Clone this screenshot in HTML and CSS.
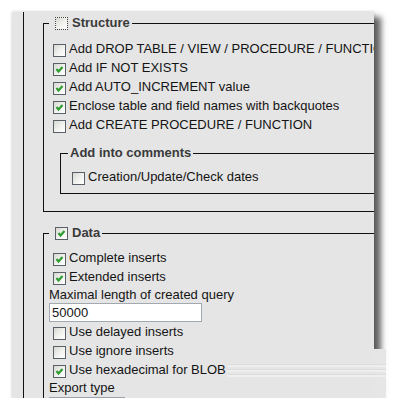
FILE: index.html
```html
<!DOCTYPE html>
<html lang="en">
<head>
    <meta charset="UTF-8">
    <meta name="viewport" content="width=device-width, initial-scale=1.0">
    <title>Export options</title>
    <link rel="stylesheet" href="styles.css">
</head>
<body>
    <div class="frame">
        <div class="sheet">
            <div class="outer">
                <fieldset class="group">
                    <legend><span class="box focus"></span>Structure</legend>
                    <div class="opt"><span class="box"></span>Add DROP TABLE / VIEW / PROCEDURE / FUNCTION / EVENT</div>
                    <div class="opt"><span class="box"><svg viewBox="0 0 11 11"><polyline points="2.5,5 4.5,7.5 8.5,3"/></svg></span>Add IF NOT EXISTS</div>
                    <div class="opt"><span class="box"><svg viewBox="0 0 11 11"><polyline points="2.5,5 4.5,7.5 8.5,3"/></svg></span>Add AUTO_INCREMENT value</div>
                    <div class="opt"><span class="box"><svg viewBox="0 0 11 11"><polyline points="2.5,5 4.5,7.5 8.5,3"/></svg></span>Enclose table and field names with backquotes</div>
                    <div class="opt"><span class="box"></span>Add CREATE PROCEDURE / FUNCTION</div>

                    <fieldset class="group sub">
                        <legend>Add into comments</legend>
                        <div class="opt"><span class="box"></span>Creation/Update/Check dates</div>
                    </fieldset>
                </fieldset>

                <fieldset class="group data">
                    <legend><span class="box"><svg viewBox="0 0 11 11"><polyline points="2.5,5 4.5,7.5 8.5,3"/></svg></span>Data</legend>
                    <div class="opt"><span class="box"><svg viewBox="0 0 11 11"><polyline points="2.5,5 4.5,7.5 8.5,3"/></svg></span>Complete inserts</div>
                    <div class="opt"><span class="box"><svg viewBox="0 0 11 11"><polyline points="2.5,5 4.5,7.5 8.5,3"/></svg></span>Extended inserts</div>
                    <div class="field-label">Maximal length of created query</div>
                    <input type="text" class="text-in" value="50000">
                    <div class="opt"><span class="box"></span>Use delayed inserts</div>
                    <div class="opt"><span class="box"></span>Use ignore inserts</div>
                    <div class="opt"><span class="box"><svg viewBox="0 0 11 11"><polyline points="2.5,5 4.5,7.5 8.5,3"/></svg></span>Use hexadecimal for BLOB</div>
                    <div class="field-label export">Export type</div>
                    <div class="select-box"></div>
                </fieldset>
            </div>
        </div>
        <div class="curl"></div>
        <div class="stripes"></div>
    </div>
</body>
</html>
```

FILE: styles.css
```css
body {
  margin: 0;
  background: #fff;
  font-family: "Liberation Sans", Arial, sans-serif;
  font-size: 13px;
  color: #141414;
}

.frame {
  position: relative;
  margin: 12px 0 0 12px;
  width: 362px;
}

.sheet {
  width: 362px;
  height: 386px;
  background: #e5e5e5;
  overflow: hidden;
  box-shadow: 7px 5px 6px rgba(0, 0, 0, 0.62), 0 0 3px rgba(0, 0, 0, 0.2);
}

.outer {
  margin-left: 11px;
  border-left: 1px solid #111;
  height: 100%;
  width: 520px;
  padding: 3px 0 0 19px;
  box-sizing: border-box;
}

.group {
  margin: 0;
  padding: 8px 5px 17px 5px;
  border: 1px solid #111;
  min-inline-size: 0;
}

.group legend {
  display: flex;
  align-items: center;
  height: 16px;
  line-height: 16px;
  padding: 0 2px;
  font-weight: bold;
  color: #3a3a3a;
}

.group legend .box {
  margin: 0 4px 0 4px;
}

.sub {
  margin: 11px 0 0 11px;
  padding: 6px 7px 7px 7px;
}

.data {
  margin-top: 13px;
  padding-top: 7px;
}

.opt {
  display: flex;
  align-items: flex-start;
  height: 19px;
  line-height: 19px;
  white-space: nowrap;
}

.opt .box {
  margin: 5px 3px 0 4px;
}

.box {
  flex: none;
  width: 13px;
  height: 13px;
  box-sizing: border-box;
  border: 1px solid #5a6068;
  background: linear-gradient(135deg, #d8d8d2 0%, #f4f4f2 60%, #fff 100%);
}

.box svg {
  display: block;
  width: 11px;
  height: 11px;
}

.box polyline {
  fill: none;
  stroke: #2f9d2f;
  stroke-width: 2.2;
}

.box.focus {
  border: 1px dotted #444;
}

.field-label {
  height: 17px;
  line-height: 17px;
  white-space: nowrap;
}

.field-label.export {
  height: 18px;
  line-height: 18px;
}

.text-in {
  display: block;
  margin: 0;
  width: 153px;
  height: 19px;
  box-sizing: border-box;
  border: 1px solid #a3a9b0;
  background: #fff;
  padding: 0 2px;
  font: inherit;
  color: #141414;
}

.select-box {
  width: 76px;
  height: 20px;
  box-sizing: border-box;
  border: 1px solid #9aa3ad;
  background: #fff;
}

.curl {
  position: absolute;
  left: 362px;
  top: 337px;
  width: 12px;
  height: 49px;
  background: #e6e6e6;
}

.stripes {
  position: absolute;
  left: 215px;
  top: 350px;
  width: 159px;
  height: 15px;
  background: repeating-linear-gradient(#e6e6e6 0 2px, #d9d9d9 2px 3px, #f2f2f2 3px 5px);
  opacity: 0.7;
}
```
